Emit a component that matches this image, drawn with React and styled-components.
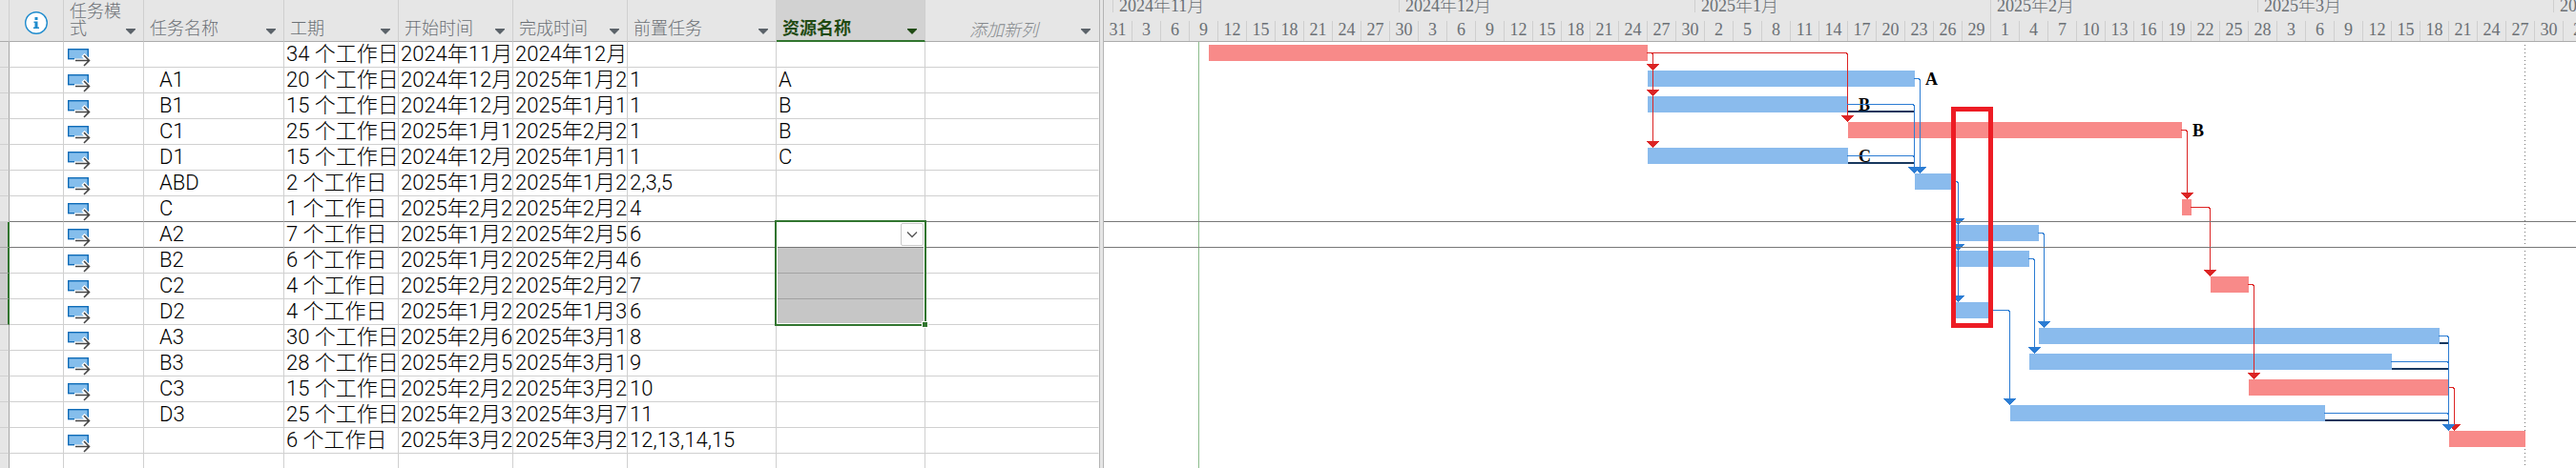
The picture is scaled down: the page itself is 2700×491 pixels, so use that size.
import React from "react";
import styled, { createGlobalStyle, css } from "styled-components";

const GlobalStyle = createGlobalStyle`
  *, *::before, *::after { box-sizing: border-box; }
  body { margin: 0; background: #fff; overflow: hidden; }
  button, select { font: inherit; margin: 0; padding: 0; }
`;

const color = {
  header: "#e6e6e6",
  headerLine: "#ababab",
  grid: "#d0d0d0",
  strong: "#777777",
  green: "#31752f",
  blueBar: "#8abbed",
  redBar: "#f88a89",
  blueLink: "#2b7cd3",
  redLink: "#dc2424",
  slack: "#17375e",
};

const ROW = 27;
const BAR = 17;
const DAY = 10;

const columns = [
  { key: "gutter", width: 10 },
  { key: "info", width: 57 },
  { key: "mode", width: 84, label: "任务模式" },
  { key: "name", width: 147, label: "任务名称" },
  { key: "duration", width: 120, label: "工期" },
  { key: "start", width: 120, label: "开始时间" },
  { key: "finish", width: 120, label: "完成时间" },
  { key: "pred", width: 156, label: "前置任务" },
  { key: "resource", width: 156, label: "资源名称", current: true },
  { key: "add", width: 182, label: "添加新列", placeholder: true },
];
const sheetWidth = columns.reduce((sum, c) => sum + c.width, 0);

// from / to are day numbers counted from 1 November 2024
const tasks = [
  { name: "", duration: "34 个工作日", start: "2024年11月", finish: "2024年12月", pred: "", res: "", from: 10, to: 56, critical: true },
  { name: "A1", duration: "20 个工作日", start: "2024年12月", finish: "2025年1月2", pred: "1", res: "A", from: 56, to: 84 },
  { name: "B1", duration: "15 个工作日", start: "2024年12月", finish: "2025年1月1", pred: "1", res: "B", from: 56, to: 77, slack: 84 },
  { name: "C1", duration: "25 个工作日", start: "2025年1月1", finish: "2025年2月2", pred: "1", res: "B", from: 77, to: 112, critical: true },
  { name: "D1", duration: "15 个工作日", start: "2024年12月", finish: "2025年1月1", pred: "1", res: "C", from: 56, to: 77, slack: 84 },
  { name: "ABD", duration: "2 个工作日", start: "2025年1月2", finish: "2025年1月2", pred: "2,3,5", res: "", from: 84, to: 88 },
  { name: "C", duration: "1 个工作日", start: "2025年2月2", finish: "2025年2月2", pred: "4", res: "", from: 112, to: 113, critical: true },
  { name: "A2", duration: "7 个工作日", start: "2025年1月2", finish: "2025年2月5", pred: "6", res: "", from: 88, to: 97 },
  { name: "B2", duration: "6 个工作日", start: "2025年1月2", finish: "2025年2月4", pred: "6", res: "", from: 88, to: 96 },
  { name: "C2", duration: "4 个工作日", start: "2025年2月2", finish: "2025年2月2", pred: "7", res: "", from: 115, to: 119, critical: true },
  { name: "D2", duration: "4 个工作日", start: "2025年1月2", finish: "2025年1月3", pred: "6", res: "", from: 88, to: 92 },
  { name: "A3", duration: "30 个工作日", start: "2025年2月6", finish: "2025年3月1", pred: "8", res: "", from: 97, to: 139, slack: 140 },
  { name: "B3", duration: "28 个工作日", start: "2025年2月5", finish: "2025年3月1", pred: "9", res: "", from: 96, to: 134, slack: 140 },
  { name: "C3", duration: "15 个工作日", start: "2025年2月2", finish: "2025年3月2", pred: "10", res: "", from: 119, to: 140, critical: true },
  { name: "D3", duration: "25 个工作日", start: "2025年2月3", finish: "2025年3月7", pred: "11", res: "", from: 94, to: 127, slack: 140 },
  { name: "", duration: "6 个工作日", start: "2025年3月2", finish: "2025年3月2", pred: "12,13,14,15", res: "", from: 140, to: 148, critical: true },
];
const ACTIVE = 7;
const SELECTED = [7, 8, 9, 10];

const links = [
  [0, 1, true], [0, 2, true], [0, 4, true], [0, 3, true],
  [3, 6, true], [6, 9, true], [9, 13, true], [13, 15, true],
  [1, 5], [2, 5], [4, 5],
  [5, 7], [5, 8], [5, 10],
  [7, 11], [8, 12], [10, 14],
  [11, 15], [12, 15], [14, 15],
];

// joined: the month begins exactly on a day tick, so both ticks form one line
const months = [
  { label: "", days: 1 },
  { label: "2024年11月", days: 30 },
  { label: "2024年12月", days: 31 },
  { label: "2025年1月", days: 31 },
  { label: "2025年2月", days: 28, joined: true },
  { label: "2025年3月", days: 31 },
  { label: "2025年4月", days: 30 },
];
const dayLabels = Array.from({ length: 60 }, (_, i) =>
  new Date(Date.UTC(2024, 9, 31 + i * 3)).getUTCDate()
);

/* ---------- layout ---------- */

const Window = styled.main`
  display: flex;
  height: 100vh;
  overflow: hidden;
  background: #fff;
`;

const SheetPane = styled.section`
  flex: none;
  overflow: hidden;
`;

const Splitter = styled.div`
  flex: none;
  width: 5px;
  background: ${color.header};
  border: solid #b4b4b4;
  border-width: 0 1px;
`;

const ChartPane = styled.section`
  flex: 1;
  min-width: 0;
  display: flex;
  flex-direction: column;
  overflow: hidden;
`;

/* ---------- sheet ---------- */

const Sheet = styled.table`
  width: ${sheetWidth}px;
  table-layout: fixed;
  border-collapse: separate;
  border-spacing: 0;
  font: 300 22px/26px Roboto, "Noto Sans CJK SC", sans-serif;
  color: #000;
`;

const HeadCell = styled.th`
  height: 44px;
  padding: 0 8px 4px 6px;
  vertical-align: bottom;
  text-align: left;
  background: ${(p) => (p.$current ? "#d2d2d2" : color.header)};
  border-right: 1px solid ${(p) => (p.$plain ? "transparent" : "#cfcfcf")};
  border-bottom: ${(p) => (p.$current ? `2px solid ${color.green}` : `1px solid ${color.headerLine}`)};
  font: 300 18px/18px "Liberation Serif", "Noto Sans CJK SC", serif;
  color: #6b7075;
  ${(p) => p.$current && css`padding-bottom: 3px; font-weight: 700; color: #1f4a12;`}
  ${(p) => p.$placeholder && css`
    padding-left: 46px;
    font-family: "Noto Sans CJK SC", sans-serif;
    font-style: oblique;
    color: #85898d;
  `}
`;

const HeadInner = styled.div`
  display: flex;
  align-items: flex-end;
  justify-content: space-between;
`;

const InfoHead = styled.div`
  display: flex;
  justify-content: center;
  padding: 0 0 3px 2px;
`;

const FilterButton = styled.button`
  flex: none;
  display: flex;
  width: 10px;
  height: 9px;
  border: 0;
  background: none;
  color: ${(p) => (p.$current ? "#1f4a12" : "#5b6269")};
`;

const Gutter = styled.th`
  background: ${(p) => (p.$selected ? "#cdcdcd" : color.header)};
  border-right: ${(p) => (p.$selected ? `2px solid ${color.green}` : "1px solid #a6a6a6")};
  border-bottom: 1px solid ${(p) => (p.$selected ? "#a6a6a6" : color.grid)};
`;

const Cell = styled.td`
  height: ${ROW}px;
  padding: 0 0 0 ${(p) => p.$indent || 2}px;
  white-space: nowrap;
  position: ${(p) => (p.$open ? "relative" : "static")};
  border-right: 1px solid ${(p) => (p.$last ? "transparent" : color.grid)};
  border-bottom: 1px solid ${(p) => (p.$strong ? color.strong : color.grid)};
  ${(p) => p.$filled && css`background: #c6c6c6; border-bottom-color: #a2a2a2;`}
`;

const SelectionFrame = styled.div`
  position: absolute;
  inset: -2px -2px auto -2px;
  height: ${ROW * 4 + 3}px;
  border: 2px solid ${color.green};
  outline: 1px solid #fff;
  outline-offset: -3px;
  pointer-events: none;

  &::after {
    content: "";
    position: absolute;
    right: -4px;
    bottom: -4px;
    width: 7px;
    height: 7px;
    background: ${color.green};
    border: 1px solid #fff;
  }
`;

const Picker = styled.select`
  display: block;
  width: 100%;
  height: 26px;
  border: 0;
  outline: 0;
  appearance: none;
  background: transparent;
`;

const PickerArrow = styled.span`
  position: absolute;
  top: 1px;
  right: 1px;
  display: flex;
  align-items: center;
  justify-content: center;
  width: 24px;
  height: 24px;
  border: 1px solid #c8c8c8;
  border-radius: 2px;
  background: #fdfdfd;
  pointer-events: none;
`;

/* ---------- timeline ---------- */

const Timescale = styled.header`
  flex: none;
  height: 44px;
  background: ${color.header};
  border-bottom: 1px solid ${color.headerLine};
  font: 300 18px/20px "Liberation Serif", "Noto Sans CJK SC", serif;
  color: #6b7075;
  overflow: hidden;
`;

const ScaleRow = styled.div`
  display: flex;
  align-items: flex-start;
  height: 22px;
  margin-left: -1px;
`;

const Month = styled.div`
  flex: none;
  width: ${(p) => p.$days * DAY}px;
  height: ${(p) => (p.$joined ? 22 : 13)}px;
  padding-left: 6px;
  line-height: 13px;
  border-left: 1px solid #cfcfcf;
`;

const Day = styled.div`
  flex: none;
  width: ${3 * DAY}px;
  height: 21px;
  line-height: 18px;
  text-align: center;
  border-left: 1px solid #cfcfcf;
`;

const Canvas = styled.svg`
  flex: 1;
  min-height: 0;
  width: 100%;
  display: block;
  font: 700 18px "Liberation Serif", serif;
`;

/* ---------- icons ---------- */

const InfoIcon = () => (
  <svg width="24" height="24" viewBox="0 0 24 24" role="img" aria-label="标记">
    <circle cx="12" cy="12" r="11.3" fill="#fff" stroke="#1e8bcd" strokeWidth="1.4" />
    <rect x="10.5" y="6" width="3" height="3" fill="#1e8bcd" />
    <path d="M9.5 10.5h4v6H15V18H9v-1.5h1.5V12h-1z" fill="#1e8bcd" />
  </svg>
);

const IconSvg = styled.svg`
  display: block;
`;

const ModeIcon = () => (
  <IconSvg width="24" height="26" viewBox="0 0 24 26" role="img" aria-label="自动计划">
    <rect x=".7" y="7.7" width="20.6" height="10" fill="#85beec" stroke="#0f6cb8" strokeWidth="1.4" />
    <path d="M7 19.5H22M16 13.5l6 6-5 5" fill="none" stroke="#fff" strokeWidth="4.5" />
    <path d="M8 19.5H22.5M17 14l5.5 5.5L17 25" fill="none" stroke="#444" strokeWidth="1.6" />
  </IconSvg>
);

const Triangle = () => (
  <svg width="10" height="6" viewBox="0 0 10 6" aria-hidden="true">
    <path d="M0 0h10v1L5 6 0 1z" fill="currentColor" />
  </svg>
);

const Chevron = () => (
  <svg width="12" height="8" viewBox="0 0 12 8" aria-hidden="true">
    <path d="M1 1.5l5 5 5-5" fill="none" stroke="#555" strokeWidth="1.3" />
  </svg>
);

/* ---------- gantt ---------- */

const x = (day) => day * DAY + DAY;
const rowTop = (row) => row * ROW;

function Link({ from, to, critical }) {
  const start = x(tasks[from].to);
  const target = x(tasks[to].from);
  const stem = (target > start ? target - 1 : start + 5) + 0.5;
  const y = rowTop(from) + 11.5;
  const tip = rowTop(to) + 3;
  const stroke = critical ? color.redLink : color.blueLink;
  return (
    <g>
      <path d={`M${start - 1} ${y}H${stem - 1.5}L${stem} ${y + 1.5}V${tip - 6}`} fill="none" stroke={stroke} />
      <path d={`M${stem - 7} ${tip - 7}H${stem + 7}L${stem} ${tip}z`} fill={stroke} />
    </g>
  );
}

function Gantt() {
  return (
    <Canvas shapeRendering="crispEdges" role="img" aria-label="甘特图">
      <line x1="99.5" x2="99.5" y1="0" y2="100%" stroke="#8cbc8c" />
      <line x1={x(148) - 0.5} x2={x(148) - 0.5} y1="3" y2="100%" stroke={color.strong} strokeDasharray="1 3" />
      {tasks.map((t, i) => (
        <g key={i}>
          <rect x={x(t.from)} y={rowTop(i) + 3} width={(t.to - t.from) * DAY} height={BAR} fill={t.critical ? color.redBar : color.blueBar} />
          {t.slack && (
            <rect x={x(t.to)} y={rowTop(i) + 18} width={(t.slack - t.to) * DAY - 1} height="2" fill={color.slack} />
          )}
          {t.res && <text x={x(t.to) + 11} y={rowTop(i) + 18}>{t.res}</text>}
        </g>
      ))}
      {links.map(([from, to, critical]) => (
        <Link key={`${from}-${to}`} from={from} to={to} critical={critical} />
      ))}
      {[ACTIVE, ACTIVE + 1].map((row) => (
        <line key={row} x1="0" x2="100%" y1={rowTop(row) - 0.5} y2={rowTop(row) - 0.5} stroke={color.strong} />
      ))}
      <rect x="890.5" y="70.5" width="39" height="227" fill="none" stroke="#ed1c24" strokeWidth="5" />
    </Canvas>
  );
}

function TaskRow({ task, index }) {
  const strong = index === ACTIVE || index === ACTIVE - 1;
  const selected = SELECTED.includes(index);
  const active = index === ACTIVE;
  return (
    <tr>
      <Gutter scope="row" $selected={selected} />
      <Cell $strong={strong} />
      <Cell $strong={strong} $indent={4}>{task && <ModeIcon />}</Cell>
      <Cell $strong={strong} $indent={16}>{task?.name}</Cell>
      <Cell $strong={strong}>{task?.duration}</Cell>
      <Cell $strong={strong}>{task?.start}</Cell>
      <Cell $strong={strong}>{task?.finish}</Cell>
      <Cell $strong={strong}>{task?.pred}</Cell>
      <Cell $strong={strong} $open={active} $filled={selected && !active}>
        {active ? (
          <>
            <Picker aria-label="资源名称" defaultValue="">
              <option value="" />
              <option>A</option>
              <option>B</option>
              <option>C</option>
            </Picker>
            <PickerArrow><Chevron /></PickerArrow>
            <SelectionFrame />
          </>
        ) : task?.res}
      </Cell>
      <Cell $strong={strong} $last />
    </tr>
  );
}

export default function App() {
  return (
    <>
      <GlobalStyle />
      <Window>
        <SheetPane>
          <Sheet>
            <colgroup>
              {columns.map((c) => <col key={c.key} width={c.width} />)}
            </colgroup>
            <thead>
              <tr>
                {columns.map((c) => (
                  <HeadCell key={c.key} scope="col" $current={c.current} $placeholder={c.placeholder} $plain={c.key === "add"}>
                    {c.key === "info" && <InfoHead><InfoIcon /></InfoHead>}
                    {c.label && (
                      <HeadInner>
                        <span>{c.label}</span>
                        <FilterButton type="button" aria-label={`筛选${c.label}`} $current={c.current}>
                          <Triangle />
                        </FilterButton>
                      </HeadInner>
                    )}
                  </HeadCell>
                ))}
              </tr>
            </thead>
            <tbody>
              {tasks.map((t, i) => <TaskRow key={i} task={t} index={i} />)}
              <TaskRow index={tasks.length} />
            </tbody>
          </Sheet>
        </SheetPane>
        <Splitter role="separator" aria-orientation="vertical" />
        <ChartPane>
          <Timescale>
            <ScaleRow>
              {months.map((m, i) => <Month key={i} $days={m.days} $joined={m.joined}>{m.label}</Month>)}
            </ScaleRow>
            <ScaleRow>
              {dayLabels.map((d, i) => <Day key={i}>{d}</Day>)}
            </ScaleRow>
          </Timescale>
          <Gantt />
        </ChartPane>
      </Window>
    </>
  );
}
